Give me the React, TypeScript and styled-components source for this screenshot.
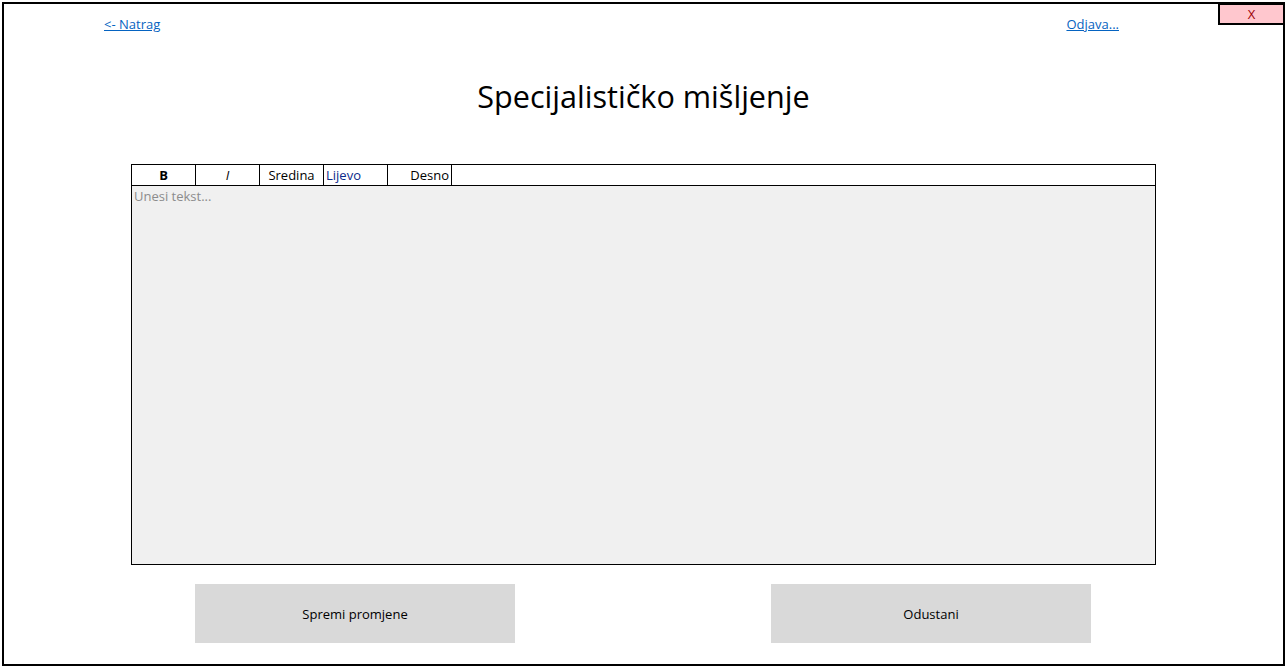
import React from 'react'
import styled, { createGlobalStyle } from 'styled-components'

const GlobalStyle = createGlobalStyle`
  html, body {
    margin: 0;
    padding: 0;
    background: #ffffff;
  }
  body {
    font-family: "Open Sans", "Noto Sans", sans-serif;
  }
`

const Frame = styled.div`
  position: relative;
  box-sizing: border-box;
  margin: 2px 0 0 2px;
  width: 1283px;
  height: 664px;
  border: 2px solid #000;
  display: flex;
  flex-direction: column;
`

const CloseButton = styled.button`
  position: absolute;
  top: -1px;
  right: -2px;
  box-sizing: border-box;
  width: 67px;
  height: 22px;
  background: #ffc7ce;
  color: #9c0006;
  border: 2px solid #000;
  font-family: "Open Sans", sans-serif;
  font-size: 13px;
  line-height: 16px;
  padding: 0;
  cursor: pointer;
`

const TopBar = styled.div`
  display: flex;
  justify-content: space-between;
  padding: 11px 164px 0 100px;
  height: 22px;
`

const NavLink = styled.a`
  color: #0563c1;
  text-decoration: underline;
  font-size: 13px;
  line-height: 18px;
  cursor: pointer;
`

const Title = styled.h1`
  margin: 38px 0 0 0;
  text-align: center;
  font-weight: 400;
  font-size: 30.6px;
  line-height: 42px;
  color: #000;
`

const Editor = styled.div`
  box-sizing: border-box;
  margin: 47px 0 0 127px;
  width: 1025px;
  height: 401px;
  border: 1px solid #000;
  display: flex;
  flex-direction: column;
`

const Toolbar = styled.div`
  display: flex;
  height: 20px;
  border-bottom: 1px solid #000;
  background: #fff;
`

const ToolButton = styled.div<{ $align?: string; $bold?: boolean; $italic?: boolean; $blue?: boolean }>`
  box-sizing: border-box;
  width: 64px;
  border-right: 1px solid #000;
  font-size: 13px;
  line-height: 20px;
  padding: 0 2px;
  text-align: ${p => p.$align || 'center'};
  font-weight: ${p => (p.$bold ? 700 : 400)};
  font-style: ${p => (p.$italic ? 'italic' : 'normal')};
  color: ${p => (p.$blue ? '#0b2a8a' : '#000')};
  white-space: nowrap;
  overflow: hidden;
  cursor: pointer;
`

const TextArea = styled.textarea`
  flex: 1;
  resize: none;
  border: none;
  outline: none;
  background: #f0f0f0;
  padding: 1px 2px;
  font-family: "Open Sans", sans-serif;
  font-size: 13px;
  line-height: 18px;
  color: #000;
  &::placeholder {
    color: #8c8c8c;
  }
`

const Actions = styled.div`
  display: flex;
  margin: 19px 0 0 191px;
  gap: 256px;
`

const ActionButton = styled.button`
  width: 320px;
  height: 59px;
  background: #d9d9d9;
  border: none;
  font-family: "Open Sans", sans-serif;
  font-size: 13px;
  color: #000;
  cursor: pointer;
`

export default function App() {
  return (
    <>
      <GlobalStyle />
      <Frame>
        <CloseButton>X</CloseButton>
        <TopBar>
          <NavLink>&lt;- Natrag</NavLink>
          <NavLink>Odjava...</NavLink>
        </TopBar>
        <Title>Specijalističko mišljenje</Title>
        <Editor>
          <Toolbar>
            <ToolButton $bold>B</ToolButton>
            <ToolButton $italic>I</ToolButton>
            <ToolButton>Sredina</ToolButton>
            <ToolButton $align="left" $blue>Lijevo</ToolButton>
            <ToolButton $align="right">Desno</ToolButton>
          </Toolbar>
          <TextArea placeholder="Unesi tekst..." />
        </Editor>
        <Actions>
          <ActionButton>Spremi promjene</ActionButton>
          <ActionButton>Odustani</ActionButton>
        </Actions>
      </Frame>
    </>
  )
}
